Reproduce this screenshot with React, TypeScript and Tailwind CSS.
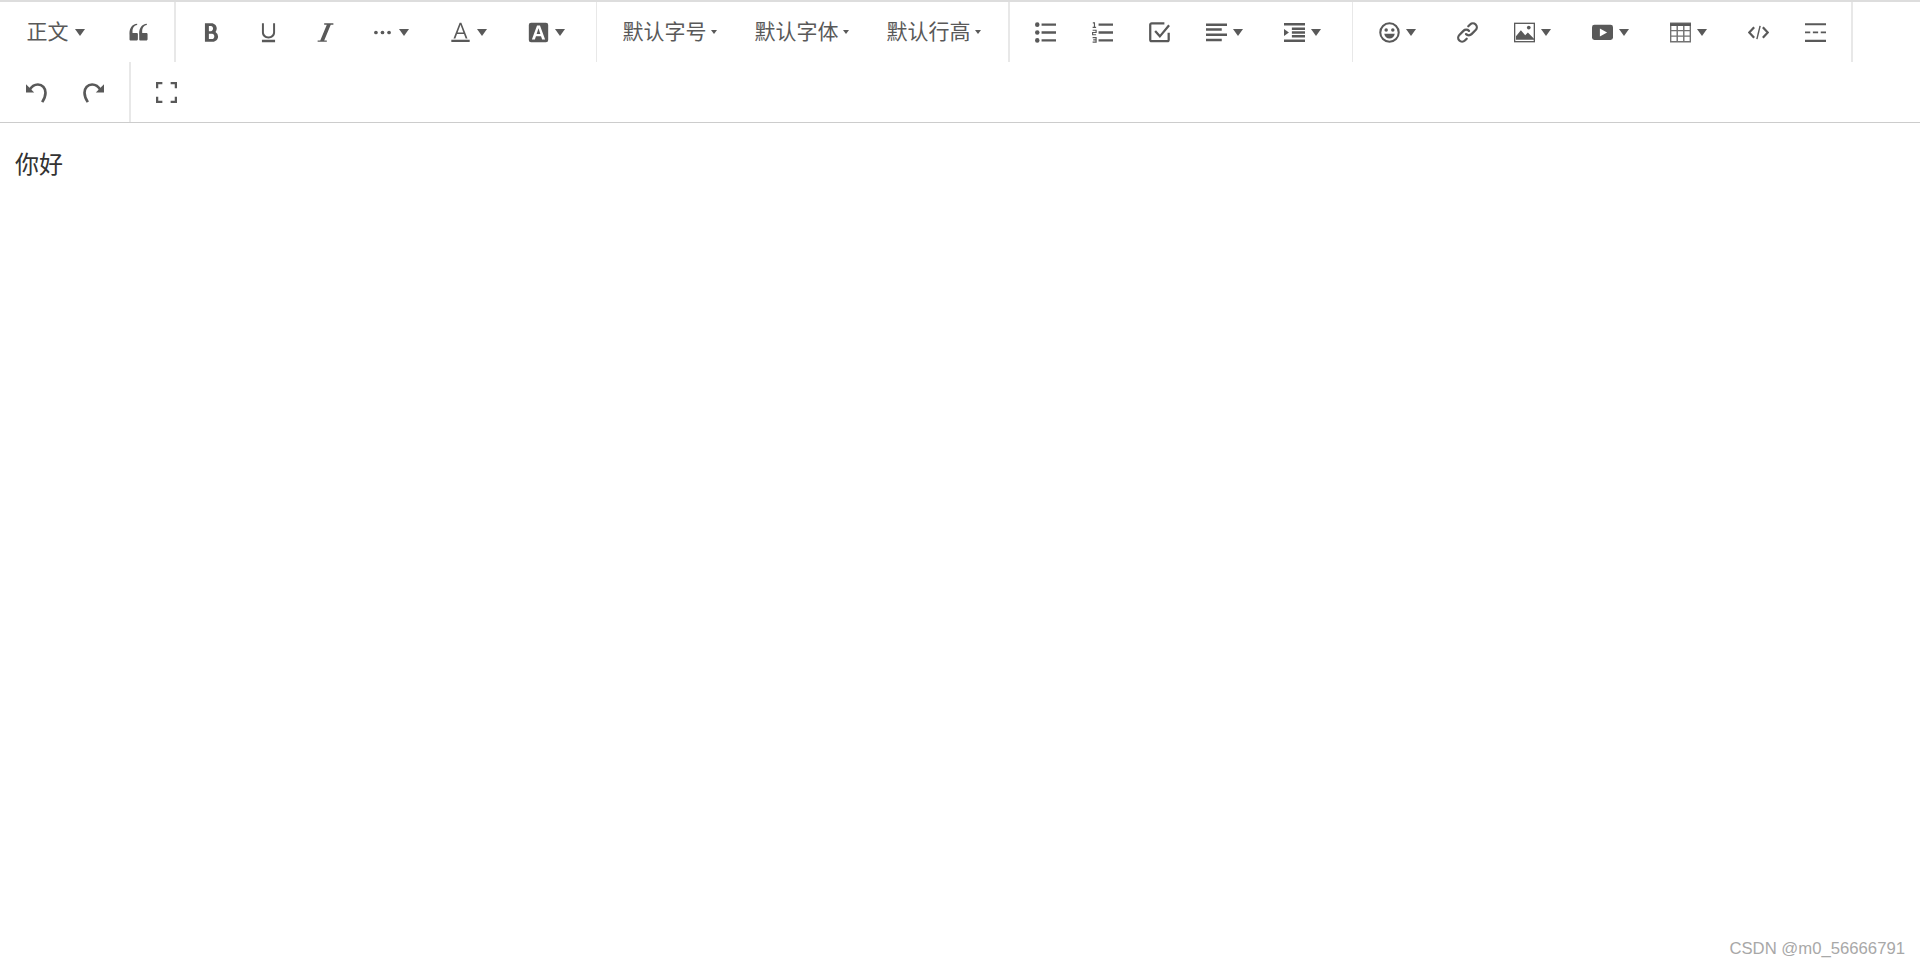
import React from 'react';

const ink = '#595959';

const Icon: React.FC<{ children: React.ReactNode }> = ({ children }) => (
  <svg viewBox="0 0 1024 1024" className="w-[21px] h-[21px] shrink-0" fill={ink}>
    {children}
  </svg>
);

const Arrow: React.FC = () => (
  <span className="ml-[6px] w-0 h-0 border-x-[5px] border-x-transparent border-t-[7px] border-t-[#595959]" />
);

const SmallArrow: React.FC = () => (
  <span className="ml-[4px] mt-[2px] w-0 h-0 border-x-[3px] border-x-transparent border-t-[4px] border-t-[#595959]" />
);

const Divider: React.FC = () => <div className="w-[1.5px] h-[60px] mx-[7.5px] bg-[#e8e8e8]" />;

const Item: React.FC<{ children: React.ReactNode; arrow?: boolean }> = ({ children, arrow }) => (
  <div className={`h-[60px] flex items-center pl-[18px] ${arrow ? 'w-[78px]' : 'w-[57px]'}`}>
    {children}
    {arrow && <Arrow />}
  </div>
);

const FontSelect: React.FC<{ label: string }> = ({ label }) => (
  <div className="h-[60px] w-[132px] flex items-center pl-[18px] pb-[2px] text-[21px] text-[#595959]">
    <span>{label}</span>
    <SmallArrow />
  </div>
);

const QuoteIcon = () => (
  <Icon>
    <path d="M894.6 907.1H605.4c-32.6 0-59-26.4-59-59V608.2l-4-14.9c0-315.9 125.5-485.1 376.5-507.5v59.8C752.7 180.4 692.3 290 692.3 472.4v59.8h202.3c32.6 0 59 26.4 59 59v255.9c0 32.6-26.4 60-59 60z m-472 0H133.4c-32.6 0-59-26.4-59-59V608.2l-4-14.9c0-315.9 125.5-485.1 376.5-507.5v59.8C280.7 180.4 220.3 290 220.3 472.4v59.8h202.3c32.6 0 59 26.4 59 59v255.9c0 32.6-26.4 60-59 60z" />
  </Icon>
);

const BoldIcon = () => (
  <Icon>
    <path d="M707.872 484.64A254.88 254.88 0 0 0 768 320c0-141.152-114.848-256-256-256H192v896h384c141.152 0 256-114.848 256-256a256.096 256.096 0 0 0-124.128-219.36zM384 192h101.504c55.968 0 101.504 57.408 101.504 128s-45.536 128-101.504 128H384V192z m159.008 640H384v-256h159.008c58.464 0 106.016 57.408 106.016 128s-47.552 128-106.016 128z" />
  </Icon>
);

const UnderlineIcon = () => (
  <Icon>
    <path d="M736 64h96v448c0 176.736-143.264 288-320 288S192 688.736 192 512V64h96v448c0 106.016 100 192 224 192s224-85.984 224-192V64z M192 864h640v128H192z" />
  </Icon>
);

const ItalicIcon = () => (
  <Icon>
    <path d="M896 64v64h-128L448 896h128v64H128v-64h128L576 128h-128V64z" />
  </Icon>
);

const MoreIcon = () => (
  <Icon>
    <circle cx="192" cy="512" r="90" />
    <circle cx="512" cy="512" r="90" />
    <circle cx="832" cy="512" r="90" />
  </Icon>
);

const ColorIcon = () => (
  <Icon>
    <path d="M470 40h84l300 760h-92l-80-210H342l-80 210h-92z m42 90L372 510h280z" />
    <path d="M64 864h896v110H64z" />
  </Icon>
);

const BgColorIcon = () => (
  <Icon>
    <rect x="40" y="40" width="944" height="944" rx="110" />
    <path d="M440 170h144l250 680H690l-56-160H390l-56 160H190z m72 140l-90 270h180z" fill="#fff" />
  </Icon>
);

const BulletIcon = () => (
  <Icon>
    <circle cx="110" cy="128" r="110" />
    <circle cx="110" cy="512" r="110" />
    <circle cx="110" cy="896" r="110" />
    <path d="M320 68h704v120H320z M320 452h704v120H320z M320 836h704v120H320z" />
  </Icon>
);

const NumberedIcon = () => (
  <Icon>
    <path d="M320 68h704v120H320z M320 452h704v120H320z M320 836h704v120H320z" />
    <g fill="none" stroke={ink} strokeWidth="56">
      <path d="M40 40h80v220 M30 260h170" />
      <path d="M30 400h170v110H30v110h170" />
      <path d="M30 760h170v110H60h140v110H30" />
    </g>
  </Icon>
);

const TodoIcon = () => (
  <Icon>
    <path
      d="M960 520v340a70 70 0 0 1-70 70H130a70 70 0 0 1-70-70V140a70 70 0 0 1 70-70h620"
      fill="none"
      stroke={ink}
      strokeWidth="110"
    />
    <path d="M300 440l230 260 450-540" fill="none" stroke={ink} strokeWidth="110" />
  </Icon>
);

const AlignIcon = () => (
  <Icon>
    <path d="M0 70h1024v120H0z M0 310h768v120H0z M0 566h1024v120H0z M0 822h768v120H0z" />
  </Icon>
);

const IndentIcon = () => (
  <Icon>
    <path d="M0 50h1024v120H0z M384 270h640v120H384z M384 452h640v120H384z M384 634h640v120H384z M0 854h1024v120H0z" />
    <path d="M0 340l240 172L0 684z" />
  </Icon>
);

const EmojiIcon = () => (
  <Icon>
    <circle cx="512" cy="512" r="450" fill="none" stroke={ink} strokeWidth="100" />
    <circle cx="350" cy="390" r="85" />
    <circle cx="674" cy="390" r="85" />
    <path d="M256 570h512c-20 150-120 240-256 240s-236-90-256-240z" />
  </Icon>
);

const LinkIcon = () => (
  <Icon>
    <g fill="none" stroke={ink} strokeWidth="110" strokeLinecap="round">
      <path d="M440 590a190 190 0 0 0 270 0l200-200a190 190 0 0 0-270-270l-90 90" />
      <path d="M584 434a190 190 0 0 0-270 0l-200 200a190 190 0 0 0 270 270l90-90" />
    </g>
  </Icon>
);

const ImageIcon = () => (
  <Icon>
    <rect x="32" y="64" width="960" height="896" fill="none" stroke={ink} strokeWidth="64" />
    <path d="M96 864V700l240-300 210 240 130-130 352 354z" />
    <circle cx="720" cy="270" r="90" />
  </Icon>
);

const VideoIcon = () => (
  <Icon>
    <path d="M120 140h784q120 0 120 120v500q0 120-120 120H120Q0 880 0 760V260q0-120 120-120z" />
    <path d="M384 320l352 192-352 192z" fill="#fff" />
  </Icon>
);

const TableIcon = () => (
  <Icon>
    <path d="M0 64h1024v130H0z" />
    <path
      d="M32 64h960v896H32z M32 420h960 M32 690h960 M352 64v896 M672 64v896"
      fill="none"
      stroke={ink}
      strokeWidth="70"
      strokeOpacity="0.85"
    />
  </Icon>
);

const CodeIcon = () => (
  <Icon>
    <g fill="none" stroke={ink} strokeWidth="110">
      <path d="M300 260L60 512l240 252" />
      <path d="M724 260l240 252-240 252" />
      <path d="M590 190L434 834" strokeWidth="70" />
    </g>
  </Icon>
);

const HrIcon = () => (
  <Icon>
    <path d="M0 64h1024v96H0z M0 864h1024v110H0z M0 464h256v90H0z M384 464h256v90H384z M768 464h256v90H768z" />
  </Icon>
);

const UndoIcon = () => (
  <Icon>
    <path
      d="M170 400C280 200 420 120 580 120C800 120 950 300 950 520C950 700 880 840 790 980"
      fill="none"
      stroke={ink}
      strokeWidth="130"
    />
    <path d="M0 110V510H400z" />
  </Icon>
);

const RedoIcon = () => (
  <Icon>
    <path
      d="M854 400C744 200 604 120 444 120C224 120 74 300 74 520C74 700 144 840 234 980"
      fill="none"
      stroke={ink}
      strokeWidth="130"
    />
    <path d="M1024 110V510H624z" />
  </Icon>
);

const FullscreenIcon = () => (
  <Icon>
    <path
      d="M310 55H55v255 M714 55h255v255 M310 969H55V714 M714 969h255V714"
      fill="none"
      stroke={ink}
      strokeWidth="110"
    />
  </Icon>
);

const App: React.FC = () => {
  return (
    <div
      className="relative h-screen bg-white overflow-hidden"
      style={{ fontFamily: '"Noto Sans CJK SC", "Liberation Sans", sans-serif' }}
    >
      {/* Toolbar */}
      <div className="flex flex-wrap px-[7.5px] border-t-2 border-t-[#dddddd] border-b-[1.5px] border-b-[#cccccc]">
        <div className="h-[60px] w-[102px] flex items-center pl-[19px] pb-[2px] text-[21px] text-[#595959]">
          <span>正文</span>
          <span className="mt-[2px] flex">
            <Arrow />
          </span>
        </div>
        <Item><QuoteIcon /></Item>
        <Divider />
        <Item><BoldIcon /></Item>
        <Item><UnderlineIcon /></Item>
        <Item><ItalicIcon /></Item>
        <Item arrow><MoreIcon /></Item>
        <Item arrow><ColorIcon /></Item>
        <Item arrow><BgColorIcon /></Item>
        <Divider />
        <FontSelect label="默认字号" />
        <FontSelect label="默认字体" />
        <FontSelect label="默认行高" />
        <Divider />
        <Item><BulletIcon /></Item>
        <Item><NumberedIcon /></Item>
        <Item><TodoIcon /></Item>
        <Item arrow><AlignIcon /></Item>
        <Item arrow><IndentIcon /></Item>
        <Divider />
        <Item arrow><EmojiIcon /></Item>
        <Item><LinkIcon /></Item>
        <Item arrow><ImageIcon /></Item>
        <Item arrow><VideoIcon /></Item>
        <Item arrow><TableIcon /></Item>
        <Item><CodeIcon /></Item>
        <Item><HrIcon /></Item>
        <Divider />
        <Item><UndoIcon /></Item>
        <Item><RedoIcon /></Item>
        <Divider />
        <Item><FullscreenIcon /></Item>
      </div>

      {/* Editor body */}
      <div className="px-[15px] pt-[22px] text-[24px] leading-[36px] text-[#333333]">你好</div>

      {/* Watermark */}
      <div
        className="absolute right-[15px] bottom-[5px] text-[16.7px] text-[#a8a8a8]"
        style={{ fontFamily: '"Liberation Sans", sans-serif' }}
      >
        CSDN @m0_56666791
      </div>
    </div>
  );
};

export default App;
